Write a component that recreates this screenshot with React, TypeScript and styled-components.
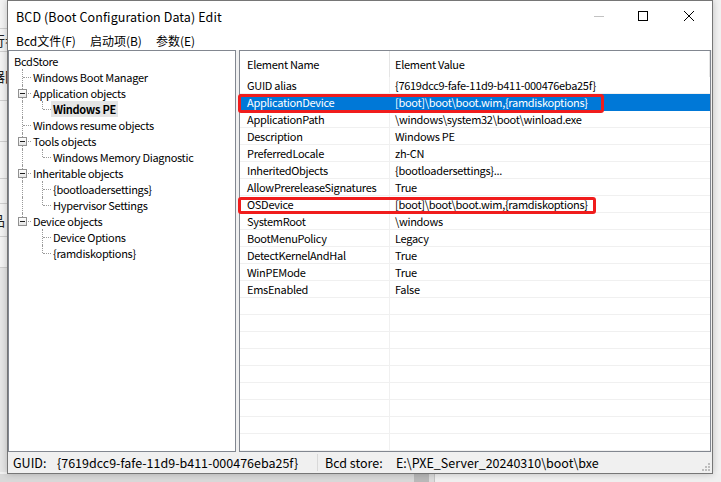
import React from 'react';
import styled, { createGlobalStyle, css } from 'styled-components';

const UI_FONT = `"Noto Sans CJK SC", "Noto Sans", sans-serif`;

const GlobalStyle = createGlobalStyle`
  html, body { margin: 0; padding: 0; }
  body {
    background: #ededed;
    font-family: ${UI_FONT};
    font-size: 12px;
    color: #000;
  }
`;

type TreeNode = {
  label: string;
  depth: 0 | 1 | 2;
  expander?: boolean;
  last?: boolean;
  parentLast?: boolean;
  selected?: boolean;
};

const tree: TreeNode[] = [
  { label: 'BcdStore', depth: 0 },
  { label: 'Windows Boot Manager', depth: 1 },
  { label: 'Application objects', depth: 1, expander: true },
  { label: 'Windows PE', depth: 2, last: true, selected: true },
  { label: 'Windows resume objects', depth: 1 },
  { label: 'Tools objects', depth: 1, expander: true },
  { label: 'Windows Memory Diagnostic', depth: 2, last: true },
  { label: 'Inheritable objects', depth: 1, expander: true },
  { label: '{bootloadersettings}', depth: 2 },
  { label: 'Hypervisor Settings', depth: 2, last: true },
  { label: 'Device objects', depth: 1, expander: true, last: true },
  { label: 'Device Options', depth: 2, parentLast: true },
  { label: '{ramdiskoptions}', depth: 2, last: true, parentLast: true },
];

const elements: [string, string][] = [
  ['GUID alias', '{7619dcc9-fafe-11d9-b411-000476eba25f}'],
  ['ApplicationDevice', '[boot]\\boot\\boot.wim,{ramdiskoptions}'],
  ['ApplicationPath', '\\windows\\system32\\boot\\winload.exe'],
  ['Description', 'Windows PE'],
  ['PreferredLocale', 'zh-CN'],
  ['InheritedObjects', '{bootloadersettings}...'],
  ['AllowPrereleaseSignatures', 'True'],
  ['OSDevice', '[boot]\\boot\\boot.wim,{ramdiskoptions}'],
  ['SystemRoot', '\\windows'],
  ['BootMenuPolicy', 'Legacy'],
  ['DetectKernelAndHal', 'True'],
  ['WinPEMode', 'True'],
  ['EmsEnabled', 'False'],
];

const TOTAL_ROWS = 22;

const backStripes = [
  { h: 28, text: '' },
  { h: 22, text: '行参' },
  { h: 48, text: '器因' },
  { h: 40, text: '' },
  { h: 36, text: '' },
  { h: 24, text: '' },
  { h: 32, text: '品' },
  { h: 30, text: '' },
];

const App = () => {
  return (
    <>
      <GlobalStyle />
      <Desktop>
        <BackLeft>
          {backStripes.map((s, i) => (
            <BackStripe key={i} $h={s.h}>{s.text}</BackStripe>
          ))}
        </BackLeft>
        <BackBottom>
          <BottomSeg $w={415} $bg="#d9d9d9" />
          <BottomSeg $w={15} $bg="#b9b9b9" />
          <BottomSeg $w={5} $bg="#dcdcdc" />
          <BottomSeg $w={286} $bg="#f0f0f0" $line />
        </BackBottom>

        <Window>
          <TitleBar>
            <Title>BCD (Boot Configuration Data) Edit</Title>
            <CaptionButton>
              <MinGlyph />
            </CaptionButton>
            <CaptionButton>
              <svg width="10" height="10" viewBox="0 0 10 10">
                <rect x="0.5" y="0.5" width="9" height="9" fill="none" stroke="#000" strokeWidth="1" />
              </svg>
            </CaptionButton>
            <CaptionButton>
              <svg width="10" height="10" viewBox="0 0 10 10">
                <path d="M0 0 L10 10 M10 0 L0 10" stroke="#000" strokeWidth="1" />
              </svg>
            </CaptionButton>
          </TitleBar>

          <MenuBar>
            <MenuItem>Bcd文件(F)</MenuItem>
            <MenuItem>启动项(B)</MenuItem>
            <MenuItem>参数(E)</MenuItem>
          </MenuBar>

          <Body>
            <TreePane>
              {tree.map((n, i) => (
                <TreeRow key={i}>
                  {n.depth >= 1 && (
                    <Gutter
                      $v={n.depth === 1 ? (n.last ? 'half' : 'full') : n.parentLast ? 'none' : 'full'}
                      $h={n.depth === 1}
                    >
                      {n.depth === 1 && n.expander && <Expander />}
                    </Gutter>
                  )}
                  {n.depth === 2 && <Gutter $v={n.last ? 'half' : 'full'} $h />}
                  <TreeLabel $selected={n.selected} $root={n.depth === 0}>
                    {n.label}
                  </TreeLabel>
                </TreeRow>
              ))}
            </TreePane>

            <ListPane>
              <Header>
                <HeaderCell $first>Element Name</HeaderCell>
                <HeaderCell>Element Value</HeaderCell>
              </Header>
              {Array.from({ length: TOTAL_ROWS }).map((_, i) => {
                const item = elements[i];
                const selected = i === 1;
                return (
                  <ListRow key={i} $selected={selected}>
                    <Cell $first $selected={selected}>{item ? item[0] : ''}</Cell>
                    <Cell $selected={selected}>{item ? item[1] : ''}</Cell>
                  </ListRow>
                );
              })}
            </ListPane>
          </Body>

          <StatusBar>
            <StatusSection $w={309} $pad={5}>
              <StatusLabel $w={44}>GUID:</StatusLabel>
              <span>{'{7619dcc9-fafe-11d9-b411-000476eba25f}'}</span>
            </StatusSection>
            <StatusDivider />
            <StatusSection $pad={7}>
              <StatusLabel $w={71}>Bcd store:</StatusLabel>
              <span>E:\PXE_Server_20240310\boot\bxe</span>
            </StatusSection>
            <Grip width="8" height="8" viewBox="0 0 8 8">
              <rect x="6" y="0" width="2" height="2" />
              <rect x="3" y="3" width="2" height="2" />
              <rect x="6" y="3" width="2" height="2" />
              <rect x="0" y="6" width="2" height="2" />
              <rect x="3" y="6" width="2" height="2" />
              <rect x="6" y="6" width="2" height="2" />
            </Grip>
          </StatusBar>
        </Window>

        <Highlight $x={238} $y={94} $w={366} $h={19} />
        <Highlight $x={238} $y={197} $w={358} $h={17} />
      </Desktop>
    </>
  );
};

export default App;

const Desktop = styled.div`
  position: relative;
  width: 721px;
  height: 482px;
  overflow: hidden;
  box-sizing: border-box;
  padding-left: 7px;
  background: #f2f2f2;
`;

const BackLeft = styled.div`
  position: absolute;
  left: 0;
  top: 0;
  width: 7px;
  height: 472px;
  display: flex;
  flex-direction: column;
  overflow: hidden;
  background: #e6e6e6;
`;

const BackStripe = styled.div<{ $h: number }>`
  flex: none;
  height: ${p => p.$h}px;
  border-bottom: 1px solid #cfcfcf;
  background: #f3f3f3;
  font-size: 14px;
  line-height: ${p => p.$h}px;
  white-space: nowrap;
  text-indent: -9px;
  color: #222;
`;

const BackBottom = styled.div`
  position: absolute;
  left: 0;
  top: 474px;
  width: 721px;
  height: 8px;
  display: flex;
`;

const BottomSeg = styled.div<{ $w: number; $bg: string; $line?: boolean }>`
  width: ${p => p.$w}px;
  background: ${p => p.$bg};
  ${p => p.$line && css`border-left: 1px solid #c4c4c4;`}
`;

const Window = styled.div`
  position: relative;
  z-index: 1;
  width: 706px;
  height: 474px;
  box-sizing: border-box;
  border: 1px solid #767676;
  background: #f0f0f0;
  box-shadow: 0 0 7px rgba(0, 0, 0, 0.22);
  display: flex;
  flex-direction: column;
`;

const TitleBar = styled.div`
  height: 30px;
  flex: none;
  display: flex;
  align-items: center;
  background: #fff;
`;

const Title = styled.div`
  flex: 1;
  padding-left: 8px;
  font-size: 12.5px;
  letter-spacing: 0.1px;
  white-space: nowrap;
`;

const CaptionButton = styled.div`
  width: 46px;
  height: 30px;
  display: flex;
  align-items: center;
  justify-content: center;
`;

const MinGlyph = styled.span`
  display: block;
  width: 10px;
  height: 1px;
  margin-left: 4px;
  background: #c2c2c2;
`;

const MenuBar = styled.div`
  height: 19px;
  flex: none;
  display: flex;
  padding-left: 1px;
  background: #fff;
`;

const MenuItem = styled.div`
  padding: 0 7px;
  line-height: 19px;
  white-space: nowrap;
`;

const Body = styled.div`
  flex: 1;
  min-height: 0;
  display: flex;
  gap: 3px;
  padding-right: 1px;
  font-size: 11px;
  letter-spacing: -0.3px;
`;

const TreePane = styled.div`
  width: 228px;
  flex: none;
  box-sizing: border-box;
  border: 1px solid #828790;
  background: #fff;
  padding: 2px 0 0 2px;
  overflow: hidden;
`;

const TreeRow = styled.div`
  height: 16px;
  display: flex;
`;

const dots = '1px dotted #9a9a9a';

const Gutter = styled.span<{ $v: 'none' | 'full' | 'half'; $h?: boolean }>`
  position: relative;
  flex: none;
  width: 20px;
  height: 16px;

  &::before {
    content: '';
    position: absolute;
    left: 11px;
    top: 0;
    height: ${p => (p.$v === 'half' ? '8px' : '16px')};
    border-left: ${p => (p.$v === 'none' ? 'none' : dots)};
  }

  &::after {
    content: '';
    display: ${p => (p.$h ? 'block' : 'none')};
    position: absolute;
    left: 12px;
    top: 8px;
    width: 8px;
    border-top: ${dots};
  }
`;

const Expander = styled.span`
  position: absolute;
  z-index: 1;
  left: 7px;
  top: 4px;
  width: 9px;
  height: 9px;
  box-sizing: border-box;
  border: 1px solid #919191;
  background: linear-gradient(#ffffff, #e4e4e4);

  &::after {
    content: '';
    position: absolute;
    left: 1px;
    top: 3px;
    width: 5px;
    height: 1px;
    background: #1e1e1e;
  }
`;

const TreeLabel = styled.span<{ $selected?: boolean; $root?: boolean }>`
  height: 16px;
  line-height: 16px;
  padding: 0 2px;
  margin-left: ${p => (p.$root ? '1px' : '0')};
  white-space: nowrap;
  font-weight: ${p => (p.$selected ? 700 : 400)};
  background: ${p => (p.$selected ? '#e5e5e5' : 'transparent')};
`;

const ListPane = styled.div`
  flex: 1;
  box-sizing: border-box;
  border: 1px solid #828790;
  background: #fff;
  overflow: hidden;
`;

const Header = styled.div`
  height: 26px;
  display: flex;
`;

const HeaderCell = styled.div<{ $first?: boolean }>`
  box-sizing: border-box;
  width: ${p => (p.$first ? '150px' : 'auto')};
  flex: ${p => (p.$first ? 'none' : '1')};
  padding-left: ${p => (p.$first ? '7px' : '5px')};
  line-height: 26px;
  border-right: 1px solid #e5e5e5;
  white-space: nowrap;
`;

const ListRow = styled.div<{ $selected?: boolean }>`
  height: 17px;
  display: flex;
  color: ${p => (p.$selected ? '#fff' : '#000')};
  background: ${p => (p.$selected ? '#0078d7' : '#fff')};
`;

const Cell = styled.div<{ $first?: boolean; $selected?: boolean }>`
  box-sizing: border-box;
  width: ${p => (p.$first ? '150px' : 'auto')};
  flex: ${p => (p.$first ? 'none' : '1')};
  padding-left: ${p => (p.$first ? '7px' : '5px')};
  line-height: 16px;
  white-space: nowrap;
  overflow: hidden;
  border-bottom: 1px solid ${p => (p.$selected ? '#0078d7' : '#f0f0f0')};
  border-right: ${p => (p.$first ? `1px solid ${p.$selected ? '#0078d7' : '#f0f0f0'}` : 'none')};
`;

const StatusBar = styled.div`
  position: relative;
  height: 21px;
  flex: none;
  display: flex;
  align-items: center;
  background: #f0f0f0;
  font-size: 12.5px;
`;

const StatusSection = styled.div<{ $w?: number; $pad: number }>`
  display: flex;
  flex: ${p => (p.$w ? 'none' : '1')};
  width: ${p => (p.$w ? `${p.$w}px` : 'auto')};
  padding-left: ${p => p.$pad}px;
  box-sizing: border-box;
  white-space: nowrap;
`;

const StatusLabel = styled.span<{ $w: number }>`
  width: ${p => p.$w}px;
  flex: none;
`;

const StatusDivider = styled.div`
  width: 1px;
  height: 17px;
  background: #d9d9d9;
`;

const Grip = styled.svg`
  position: absolute;
  right: 2px;
  bottom: 2px;
  fill: #bdbdbd;
`;

const Highlight = styled.div<{ $x: number; $y: number; $w: number; $h: number }>`
  position: absolute;
  z-index: 2;
  left: ${p => p.$x}px;
  top: ${p => p.$y}px;
  width: ${p => p.$w}px;
  height: ${p => p.$h}px;
  box-sizing: border-box;
  border: 3px solid #f01c1c;
  border-radius: 3px;
`;
